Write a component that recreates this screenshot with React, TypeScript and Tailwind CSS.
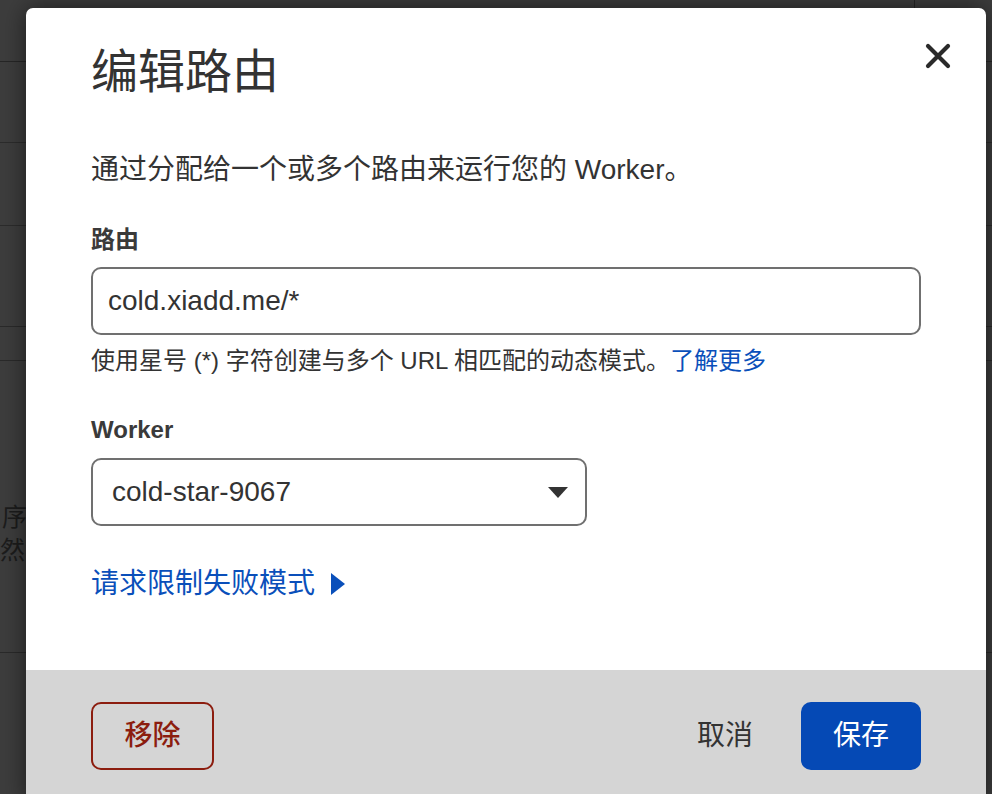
import React from "react";

const font = { fontFamily: '"Liberation Sans", "Noto Sans CJK SC", sans-serif' };

const CloseIcon = () => (
  <svg width="26" height="26" viewBox="0 0 26 26">
    <path d="M3 3 L23 23 M23 3 L3 23" stroke="#2a2a2a" strokeWidth="4.2" strokeLinecap="round" />
  </svg>
);

const Caret = () => (
  <svg width="20" height="11" viewBox="0 0 20 11">
    <path d="M0 0 H20 L10 11 Z" fill="#333333" />
  </svg>
);

const PlayTriangle = () => (
  <svg width="14" height="22" viewBox="0 0 14 22">
    <path d="M0 0 L14 11 L0 22 Z" fill="#0a4fba" />
  </svg>
);

const BackgroundPage = () => (
  <div className="w-full text-[#1c1c1c]">
    <div className="h-[62px] border-b border-[#262626] flex">
      <div className="w-[915px] border-r border-[#262626]" />
    </div>
    <div className="h-[81px] border-b border-[#2c2c2c]" />
    <div className="h-[83px] border-b border-[#2c2c2c]" />
    <div className="h-[101px] border-b border-[#2a2a2a]" />
    <div className="h-[34px] border-b border-[#2a2a2a]" />
    <div className="h-[292px] border-b border-[#2a2a2a] pt-[140px] text-[25px] leading-[33px]">
      <div className="pl-[2px]">序</div>
      <div>然</div>
    </div>
  </div>
);

export default function App() {
  return (
    <div className="relative h-screen w-full overflow-hidden bg-[#3d3d3d]" style={font}>
      <BackgroundPage />

      <div className="absolute left-[26px] top-[8px] w-[960px] rounded-t-[7px] bg-white shadow-[0_0_24px_rgba(0,0,0,0.55)]">
        <button className="absolute right-[35px] top-[35px]">
          <CloseIcon />
        </button>

        <div className="px-[65px] pt-[36px] pb-[66px] text-[#333333]">
          <h2 className="text-[47px] leading-[56px]">编辑路由</h2>

          <p className="mt-[50px] text-[28px] leading-[40px]">通过分配给一个或多个路由来运行您的 Worker。</p>

          <div className="mt-[34px] text-[24px] leading-[32px] font-bold text-[#3a3a3a]">路由</div>
          <div className="mt-[11px] flex h-[68px] items-center rounded-[10px] border-2 border-[#707070] px-[15px] text-[28px]">
            cold.xiadd.me/*
          </div>
          <p className="mt-[10px] text-[24px] leading-[32px]">
            使用星号 (*) 字符创建与多个 URL 相匹配的动态模式。
            <span className="text-[#0a4fba]">了解更多</span>
          </p>

          <div className="mt-[37px] text-[24px] leading-[32px] font-bold text-[#3a3a3a]">Worker</div>
          <div className="mt-[12px] flex h-[68px] w-[496px] items-center justify-between rounded-[10px] border-2 border-[#707070] pl-[19px] pr-[17px] text-[28px]">
            <span>cold-star-9067</span>
            <Caret />
          </div>

          <div className="mt-[38px] flex items-center gap-[16px] text-[28px] leading-[40px] text-[#0a4fba]">
            <span>请求限制失败模式</span>
            <PlayTriangle />
          </div>
        </div>

        <div className="flex items-center justify-between bg-[#d5d5d5] px-[65px] pt-[32px] pb-[32px]">
          <button className="h-[68px] w-[123px] rounded-[10px] border-2 border-[#8c1d0f] text-[28px] font-medium text-[#8c1d0f]">
            移除
          </button>
          <div className="flex items-center">
            <button className="mr-[48px] text-[28px] text-[#333333]">取消</button>
            <button className="h-[68px] w-[120px] rounded-[10px] bg-[#0549b5] text-[28px] text-white">保存</button>
          </div>
        </div>
      </div>
    </div>
  );
}
